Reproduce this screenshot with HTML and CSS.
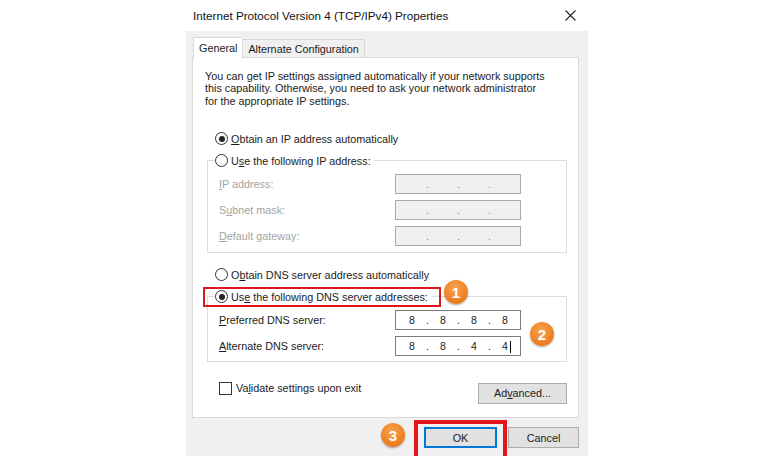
FILE: index.html
```html
<!DOCTYPE html>
<html>
  <head>
    <title>Internet Protocol Version 4 (TCP/IPv4) Properties</title>
    <link rel="stylesheet" href="styles.css">
  </head>
  <body>
    <div class="dialog">
      <div class="titlebar">
        <span class="title">Internet Protocol Version 4 (TCP/IPv4) Properties</span>
        <svg class="close" width="11" height="11" viewBox="0 0 11 11">
          <path d="M0.5 0.5L10.5 10.5M10.5 0.5L0.5 10.5" stroke="#222" stroke-width="1.1" fill="none"/>
        </svg>
      </div>

      <div class="frame">
        <div class="tabs">
          <div class="tab active">General</div>
          <div class="tab">Alternate Configuration</div>
        </div>

        <div class="page">
          <p class="intro">
            You can get IP settings assigned automatically if your network supports<br>
            this capability. Otherwise, you need to ask your network administrator<br>
            for the appropriate IP settings.
          </p>

          <div class="option first">
            <span class="radio on"></span>
            <span><u>O</u>btain an IP address automatically</span>
          </div>

          <fieldset class="group">
            <legend class="option">
              <span class="radio"></span>
              <span>U<u>s</u>e the following IP address:</span>
            </legend>
            <div class="field off">
              <span class="label"><u>I</u>P address:</span>
              <span class="ip"><span class="oct"></span><span class="dot">.</span><span class="oct"></span><span class="dot">.</span><span class="oct"></span><span class="dot">.</span><span class="oct"></span></span>
            </div>
            <div class="field off">
              <span class="label">S<u>u</u>bnet mask:</span>
              <span class="ip"><span class="oct"></span><span class="dot">.</span><span class="oct"></span><span class="dot">.</span><span class="oct"></span><span class="dot">.</span><span class="oct"></span></span>
            </div>
            <div class="field off">
              <span class="label"><u>D</u>efault gateway:</span>
              <span class="ip"><span class="oct"></span><span class="dot">.</span><span class="oct"></span><span class="dot">.</span><span class="oct"></span><span class="dot">.</span><span class="oct"></span></span>
            </div>
          </fieldset>

          <div class="option dns-auto">
            <span class="radio"></span>
            <span>O<u>b</u>tain DNS server address automatically</span>
          </div>

          <fieldset class="group dns">
            <legend class="option marked">
              <span class="radio on"></span>
              <span>Us<u>e</u> the following DNS server addresses:</span>
            </legend>
            <div class="field">
              <span class="label"><u>P</u>referred DNS server:</span>
              <span class="ip"><span class="oct">8</span><span class="dot">.</span><span class="oct">8</span><span class="dot">.</span><span class="oct">8</span><span class="dot">.</span><span class="oct">8</span></span>
            </div>
            <div class="field">
              <span class="label"><u>A</u>lternate DNS server:</span>
              <span class="ip"><span class="oct">8</span><span class="dot">.</span><span class="oct">8</span><span class="dot">.</span><span class="oct">4</span><span class="dot">.</span><span class="oct">4<span class="caret"></span></span></span>
            </div>
          </fieldset>

          <div class="bottom-row">
            <div class="check">
              <span class="box"></span>
              <span>Va<u>l</u>idate settings upon exit</span>
            </div>
            <button class="btn advanced">Ad<u>v</u>anced...</button>
          </div>
        </div>

        <div class="actions">
          <button class="btn ok">OK</button>
          <button class="btn">Cancel</button>
        </div>
      </div>

      <!-- step markers -->
      <span class="badge b1">1</span>
      <span class="badge b2">2</span>
      <span class="badge b3">3</span>
    </div>
  </body>
</html>
```

FILE: styles.css
```css
* {
  box-sizing: border-box;
}

body, html {
  margin: 0;
  width: 760px;
  height: 456px;
  overflow: hidden;
}

body {
  background-color: #fff;
  font-family: "Liberation Sans", Arial, sans-serif;
  font-size: 10.8px;
  color: #1b1b1b;
}

u {
  text-decoration-thickness: 1px;
  text-underline-offset: 1px;
}

.dialog {
  position: relative;
  width: 402px;
  margin-left: 186px;
}

.titlebar {
  height: 31px;
  display: flex;
  align-items: center;
  justify-content: space-between;
  padding: 0 12px 1px 7px;
}

.title {
  font-size: 11.7px;
  color: #111;
}

.frame {
  background-color: #f0f0f0;
  height: 425px;
  padding: 6px 9px 0 6px;
}

.tabs {
  display: flex;
  height: 20px;
  padding-left: 1px;
}

.tab {
  height: 18px;
  margin-top: 2px;
  padding: 3px 5px 0 5px;
  border: 1px solid #d9d9d9;
  border-bottom: none;
  background-color: #f0f0f0;
}

.tab.active {
  position: relative;
  z-index: 1;
  height: 21px;
  margin-top: 0;
  padding: 4px 5px 0 5px;
  background-color: #fff;
  border-right: none;
}

.page {
  height: 361px;
  background-color: #fff;
  border: 1px solid #d9d9d9;
  padding: 12px 11px 0 12px;
}

.intro {
  margin: 0;
  line-height: 12.3px;
}

.option {
  display: flex;
  align-items: center;
  gap: 3px;
  height: 16px;
}

.option.first {
  margin: 24px 0 0 10px;
}

.radio {
  width: 13px;
  height: 13px;
  border: 1px solid #333;
  border-radius: 50%;
  background-color: #fff;
  display: flex;
  align-items: center;
  justify-content: center;
}

.radio.on::after {
  content: "";
  width: 6px;
  height: 6px;
  border-radius: 50%;
  background-color: #222;
}

.group {
  width: 360px;
  margin: 6px 0 0 2px;
  padding: 0 0 6px 7px;
  border: 1px solid #dcdcdc;
  min-inline-size: 0;
}

.group > legend {
  padding: 0 3px 0 0;
}

.field {
  display: flex;
  align-items: center;
  margin-top: 6px;
  padding-left: 4px;
}

.group > legend + .field {
  margin-top: 5px;
}

.field .label {
  width: 176px;
}

.field.off .label {
  color: #a3a3a3;
}

.ip {
  display: flex;
  align-items: center;
  width: 126px;
  height: 20px;
  padding-left: 5px;
  border: 1px solid #7a7a7a;
  background-color: #fff;
  font-size: 10.5px;
}

.field.off .ip {
  background-color: #f0f0f0;
  border-color: #a9a9a9;
  color: #8a8a8a;
}

.oct {
  width: 22px;
  text-align: center;
  position: relative;
}

.dot {
  width: 9px;
  text-align: center;
}

.caret {
  position: absolute;
  top: 1px;
  right: 5px;
  width: 1px;
  height: 12px;
  background-color: #000;
}

.dns-auto {
  margin: 14px 0 0 10px;
}

.group.dns {
  padding-bottom: 5px;
}

.marked {
  position: relative;
}

.marked::before {
  content: "";
  position: absolute;
  left: -12px;
  right: -10px;
  top: -2px;
  bottom: -2px;
  border: 2px solid #e3151c;
}

.bottom-row {
  display: flex;
  justify-content: space-between;
  align-items: flex-start;
  margin-top: 20px;
  padding-left: 14px;
}

.check {
  display: flex;
  align-items: center;
  gap: 4px;
  height: 13px;
}

.box {
  width: 13px;
  height: 13px;
  border: 1px solid #333;
  background-color: #fff;
}

.btn {
  font-family: inherit;
  font-size: 10.8px;
  color: #1b1b1b;
  height: 21px;
  padding: 0;
  margin: 0;
  background-color: #e1e1e1;
  border: 1px solid #adadad;
}

.advanced {
  width: 89px;
  margin-top: 1px;
}

.actions {
  display: flex;
  justify-content: flex-end;
  gap: 11px;
  margin-top: 9px;
}

.actions .btn {
  width: 71px;
}

.btn.ok {
  position: relative;
  width: 73px;
  border: 2px solid #0078d7;
}

.btn.ok::before {
  content: "";
  position: absolute;
  left: -12px;
  right: -12px;
  top: -9px;
  height: 50px;
  border: 4px solid #e3151c;
}

.badge {
  position: absolute;
  width: 24px;
  height: 24px;
  border-radius: 50%;
  background: radial-gradient(circle at 45% 35%, #f8a452 0%, #ef8426 55%, #e06f14 100%);
  box-shadow: 0 1px 2px rgba(0, 0, 0, 0.35);
  color: #fff;
  font-size: 15px;
  font-weight: bold;
  display: flex;
  align-items: center;
  justify-content: center;
}

.b1 {
  left: 258px;
  top: 280px;
}

.b2 {
  left: 344px;
  top: 322px;
}

.b3 {
  left: 195px;
  top: 423px;
}
```
